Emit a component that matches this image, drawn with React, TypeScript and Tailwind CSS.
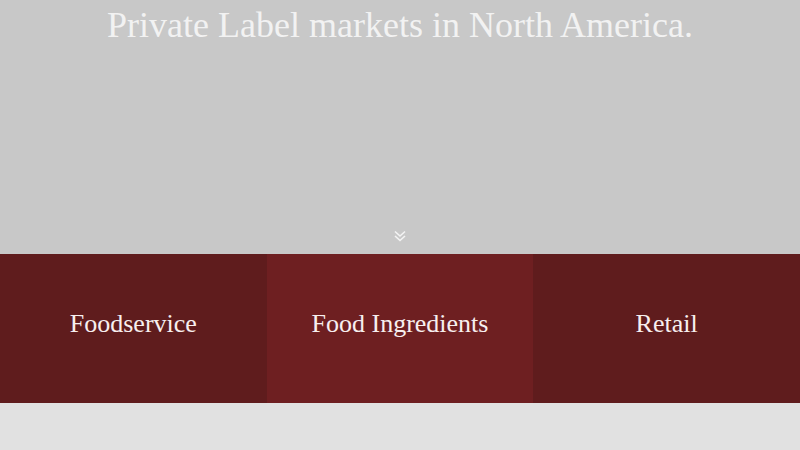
export default function App() {
  const serif = { fontFamily: '"Liberation Serif", "DejaVu Serif", serif' };
  return (
    <div className="w-[800px] h-[450px] overflow-hidden bg-[#e1e1e1]" style={serif}>
      <section className="h-[254px] bg-[#c8c8c8] flex flex-col items-center">
        <h1 className="text-[36px] leading-none text-[#f2f2f2] mt-[7px]">
          Private Label markets in North America.
        </h1>
        <div className="flex-1" />
        <svg className="mb-[11px]" width="14" height="14" viewBox="0 0 14 14" fill="none" stroke="#f4f4f4" strokeWidth="1.6">
          <path d="M2 2.5 L7 7 L12 2.5" />
          <path d="M2 7 L7 11.5 L12 7" />
        </svg>
      </section>
      <section className="h-[149px] grid grid-cols-3 text-[#f7efef] text-[26px]">
        <a className="bg-[#5f1c1d] flex items-center justify-center pb-[10px]">Foodservice</a>
        <a className="bg-[#6e1f21] flex items-center justify-center pb-[10px]">Food Ingredients</a>
        <a className="bg-[#5f1c1d] flex items-center justify-center pb-[10px]">Retail</a>
      </section>
    </div>
  );
}
